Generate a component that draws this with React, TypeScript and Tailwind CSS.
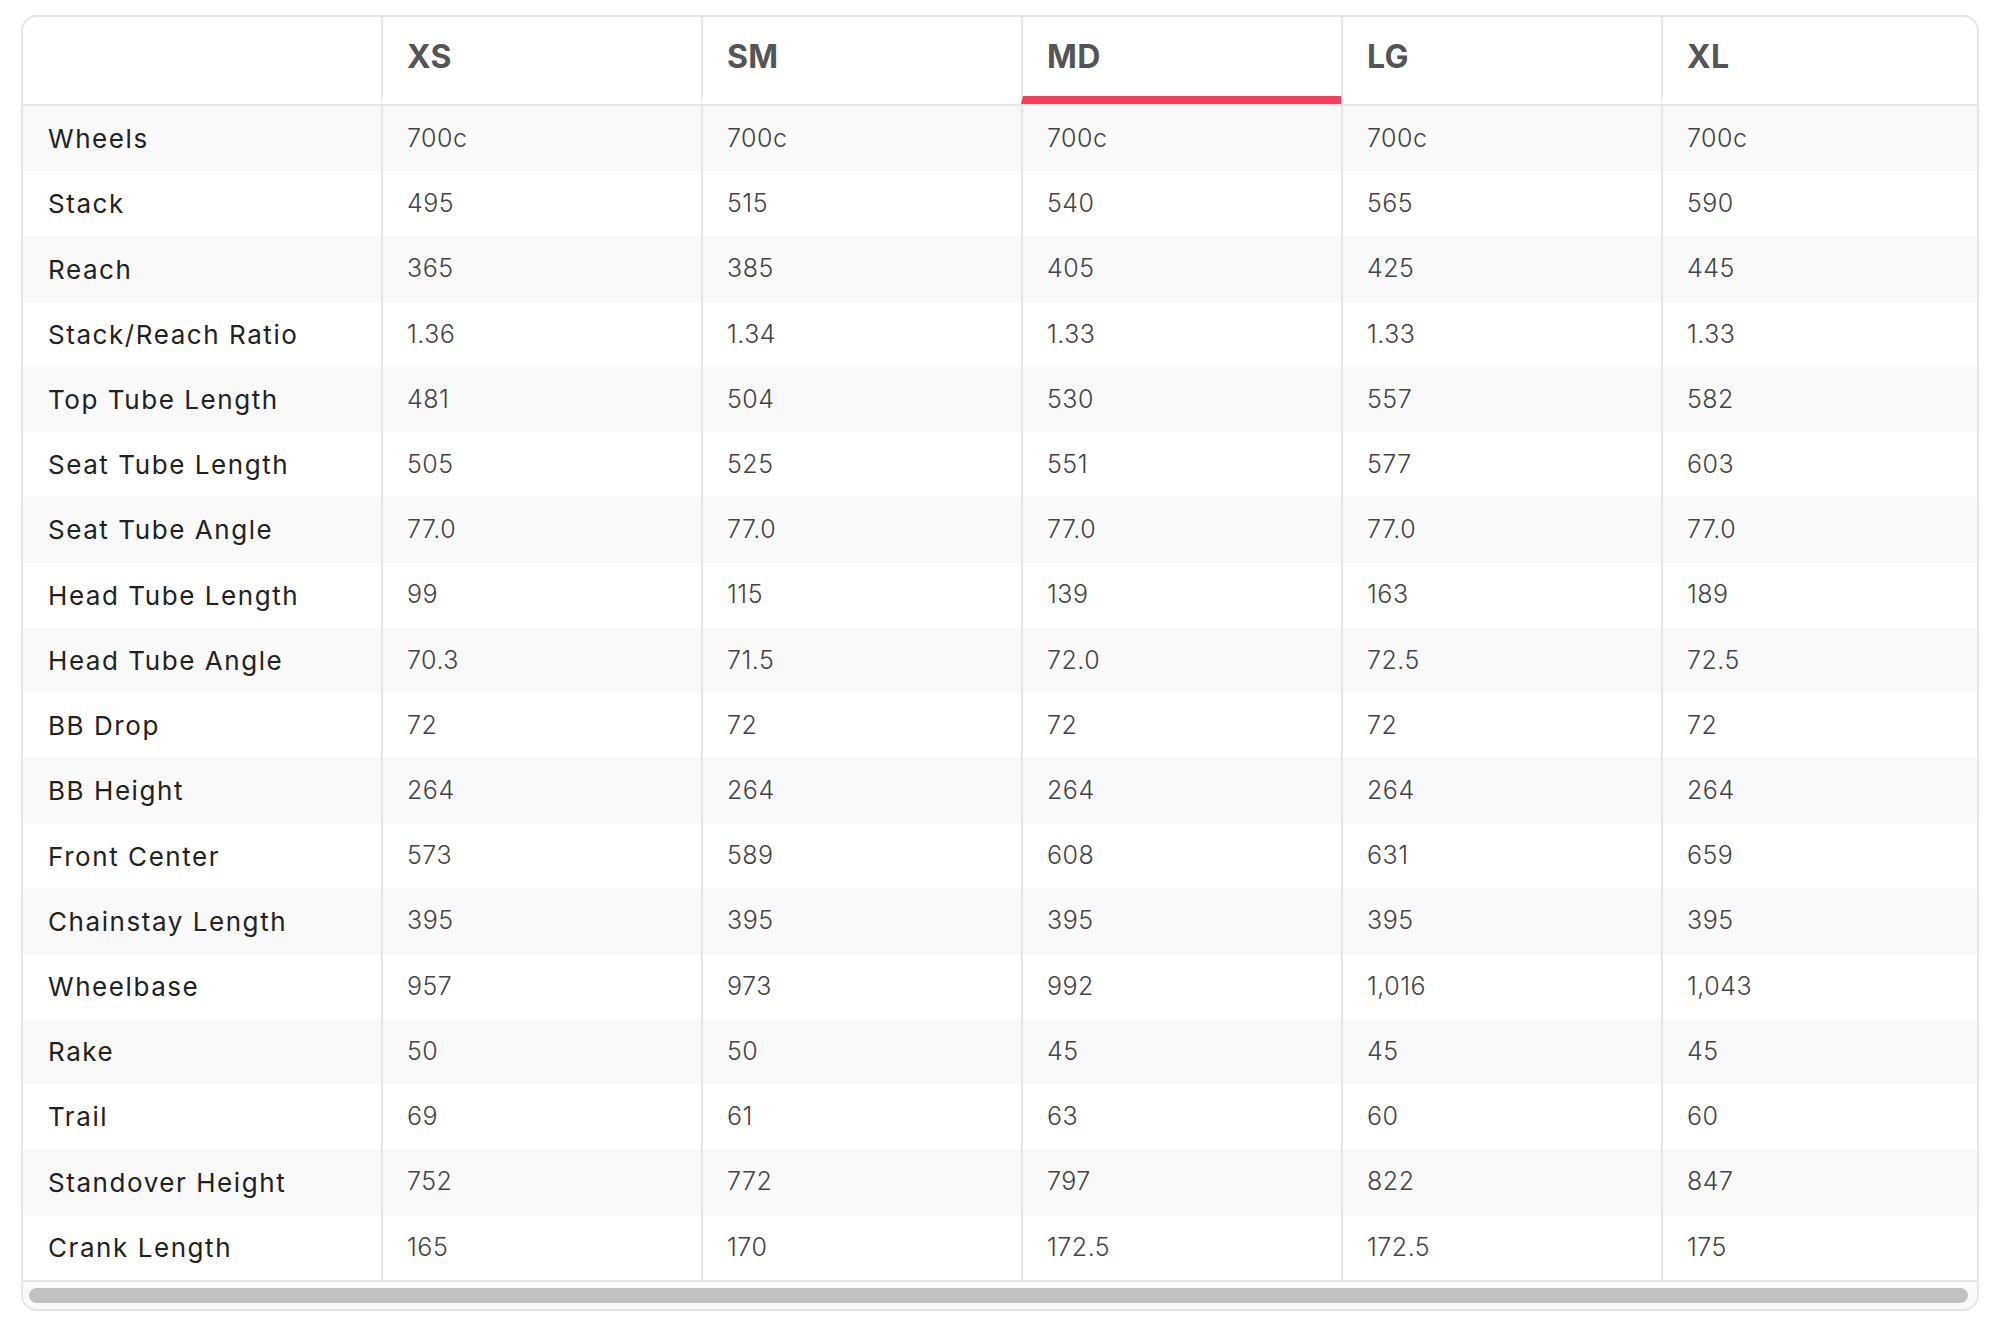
import React from "react";

const SIZES = ["XS", "SM", "MD", "LG", "XL"];
const ACTIVE = "MD";

// geometry rows: label followed by one value per size
const ROWS: [string, string[]][] = [
  ["Wheels", ["700c", "700c", "700c", "700c", "700c"]],
  ["Stack", ["495", "515", "540", "565", "590"]],
  ["Reach", ["365", "385", "405", "425", "445"]],
  ["Stack/Reach Ratio", ["1.36", "1.34", "1.33", "1.33", "1.33"]],
  ["Top Tube Length", ["481", "504", "530", "557", "582"]],
  ["Seat Tube Length", ["505", "525", "551", "577", "603"]],
  ["Seat Tube Angle", ["77.0", "77.0", "77.0", "77.0", "77.0"]],
  ["Head Tube Length", ["99", "115", "139", "163", "189"]],
  ["Head Tube Angle", ["70.3", "71.5", "72.0", "72.5", "72.5"]],
  ["BB Drop", ["72", "72", "72", "72", "72"]],
  ["BB Height", ["264", "264", "264", "264", "264"]],
  ["Front Center", ["573", "589", "608", "631", "659"]],
  ["Chainstay Length", ["395", "395", "395", "395", "395"]],
  ["Wheelbase", ["957", "973", "992", "1,016", "1,043"]],
  ["Rake", ["50", "50", "45", "45", "45"]],
  ["Trail", ["69", "61", "63", "60", "60"]],
  ["Standover Height", ["752", "772", "797", "822", "847"]],
  ["Crank Length", ["165", "170", "172.5", "172.5", "175"]],
];

function HeaderRow() {
  return (
    <div className="flex h-[89px] border-b-2 border-[#e6e6e6]">
      <div className="w-[358px] shrink-0 border-b-[8px] border-transparent" />
      {SIZES.map((s, i) => (
        <div
          key={s}
          className={`flex items-center border-l-2 border-l-[#e6e6e6] border-b-[8px] px-6 ${
            s === ACTIVE ? "border-b-[#f43f5e]" : "border-b-transparent"
          } ${i === SIZES.length - 1 ? "flex-1" : "w-[320px] shrink-0"}`}
        >
          <span className="text-[32px] font-bold text-[#555555] tracking-[0.01em]">
            {s}
          </span>
        </div>
      ))}
    </div>
  );
}

function GeoRow({ label, values, striped }: { label: string; values: string[]; striped: boolean }) {
  return (
    <div className={`flex h-[65.22px] ${striped ? "bg-[#f9f9f9]" : "bg-white"}`}>
      <div className="w-[358px] shrink-0 flex items-center pl-[25px] text-[26px] text-[#222222] tracking-[0.06em]">
        {label}
      </div>
      {values.map((v, i) => (
        <div
          key={i}
          className={`flex items-center border-l-2 border-[#e6e6e6] px-6 text-[25px] font-light text-[#444444] tracking-[0.02em] ${
            i === values.length - 1 ? "flex-1" : "w-[320px] shrink-0"
          }`}
        >
          {v}
        </div>
      ))}
    </div>
  );
}

export default function App() {
  return (
    <div className="min-h-screen bg-white pt-[15px] pl-[21px]" style={{ fontFamily: "Inter, 'DejaVu Sans', sans-serif" }}>
      <div className="w-[1958px] border-2 border-[#e6e6e6] rounded-[16px] overflow-hidden bg-white">
        <HeaderRow />
        {ROWS.map(([label, values], i) => (
          <GeoRow key={label} label={label} values={values} striped={i % 2 === 0} />
        ))}
        {/* horizontal scrollbar */}
        <div className="border-t-2 border-[#e6e6e6] bg-[#fafafa] h-[29px] pt-[6px] pl-[6px] pr-[9px]">
          <div className="h-[15px] rounded-full bg-[#c1c1c1]" />
        </div>
      </div>
    </div>
  );
}
